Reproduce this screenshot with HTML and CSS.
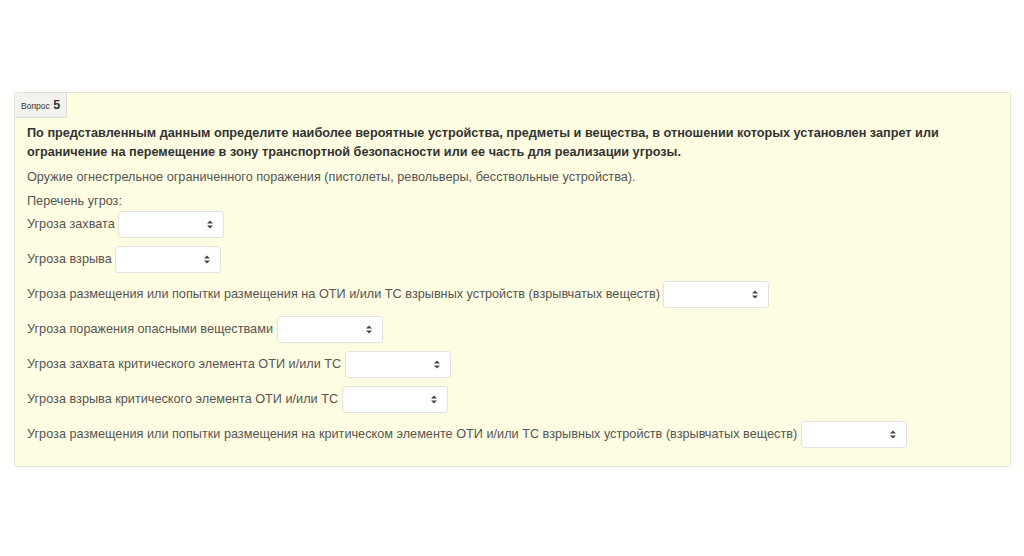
FILE: index.html
```html
<!DOCTYPE html>
<html lang="ru">
<head>
    <meta charset="UTF-8">
    <title>Вопрос 5</title>
    <link rel="stylesheet" href="styles.css">
</head>
<body>
<div class="question">
    <div class="qtab"><span class="qword">Вопрос</span> <b class="qnum">5</b></div>
    <div class="qbody">
        <p class="qtext">По представленным данным определите наиболее вероятные устройства, предметы и вещества, в отношении которых установлен запрет или ограничение на перемещение в зону транспортной безопасности или ее часть для реализации угрозы.</p>
        <p class="qinfo">Оружие огнестрельное ограниченного поражения (пистолеты, револьверы, бесствольные устройства).</p>
        <p class="qlist">Перечень угроз:</p>

        <div class="row">Угроза захвата <span class="sel"><select></select><svg class="arr" width="6" height="9" viewBox="0 0 6 9"><path d="M0 3.5L3 0.5L6 3.5ZM0 5.5L3 8.5L6 5.5Z" fill="#444"/></svg></span></div>
        <div class="row">Угроза взрыва <span class="sel"><select></select><svg class="arr" width="6" height="9" viewBox="0 0 6 9"><path d="M0 3.5L3 0.5L6 3.5ZM0 5.5L3 8.5L6 5.5Z" fill="#444"/></svg></span></div>
        <div class="row">Угроза размещения или попытки размещения на ОТИ и/или ТС взрывных устройств (взрывчатых веществ) <span class="sel"><select></select><svg class="arr" width="6" height="9" viewBox="0 0 6 9"><path d="M0 3.5L3 0.5L6 3.5ZM0 5.5L3 8.5L6 5.5Z" fill="#444"/></svg></span></div>
        <div class="row">Угроза поражения опасными веществами <span class="sel"><select></select><svg class="arr" width="6" height="9" viewBox="0 0 6 9"><path d="M0 3.5L3 0.5L6 3.5ZM0 5.5L3 8.5L6 5.5Z" fill="#444"/></svg></span></div>
        <div class="row">Угроза захвата критического элемента ОТИ и/или ТС <span class="sel"><select></select><svg class="arr" width="6" height="9" viewBox="0 0 6 9"><path d="M0 3.5L3 0.5L6 3.5ZM0 5.5L3 8.5L6 5.5Z" fill="#444"/></svg></span></div>
        <div class="row">Угроза взрыва критического элемента ОТИ и/или ТС <span class="sel"><select></select><svg class="arr" width="6" height="9" viewBox="0 0 6 9"><path d="M0 3.5L3 0.5L6 3.5ZM0 5.5L3 8.5L6 5.5Z" fill="#444"/></svg></span></div>
        <div class="row">Угроза размещения или попытки размещения на критическом элементе ОТИ и/или ТС взрывных устройств (взрывчатых веществ) <span class="sel"><select></select><svg class="arr" width="6" height="9" viewBox="0 0 6 9"><path d="M0 3.5L3 0.5L6 3.5ZM0 5.5L3 8.5L6 5.5Z" fill="#444"/></svg></span></div>
    </div>
</div>
</body>
</html>
```

FILE: styles.css
```css
body{
    margin: 0;
    background: #fff;
    font-family: "Liberation Sans", Arial, sans-serif;
    font-size: 12.7px;
    color: #555;
}
.question{
    margin: 92px 13px 0 14px;
    background-color: #fffde1;
    border: 1px solid #e3e3d3;
    border-radius: 3px;
}
.qtab{
    display: inline-block;
    height: 24px;
    line-height: 24px;
    padding: 0 6px 0 6px;
    background-color: #f2f2ee;
    border-right: 1px solid #dcdcd4;
    border-bottom: 1px solid #dcdcd4;
    border-radius: 3px 0 0 0;
    color: #333;
}
.qword{
    font-size: 8.5px;
}
.qnum{
    font-size: 12.5px;
}
.qbody{
    padding: 6px 12px 18px 12px;
}
.qtext{
    margin: 0;
    font-weight: bold;
    color: #333;
    line-height: 19px;
}
.qinfo{
    margin: 7px 0 0 0;
    line-height: 17px;
}
.qlist{
    margin: 7px 0 1px 0;
    line-height: 17px;
}
.row{
    margin-top: 8px;
}
.row:first-of-type{
    margin-top: 0;
}
.sel{
    position: relative;
    display: inline-block;
    vertical-align: middle;
}
.sel select{
    appearance: none;
    -webkit-appearance: none;
    display: block;
    width: 106px;
    height: 27px;
    background: #fff;
    border: 1px solid #e2e2e2;
    border-radius: 3px;
    margin: 0;
}
.arr{
    position: absolute;
    right: 11px;
    top: 9px;
}
```
